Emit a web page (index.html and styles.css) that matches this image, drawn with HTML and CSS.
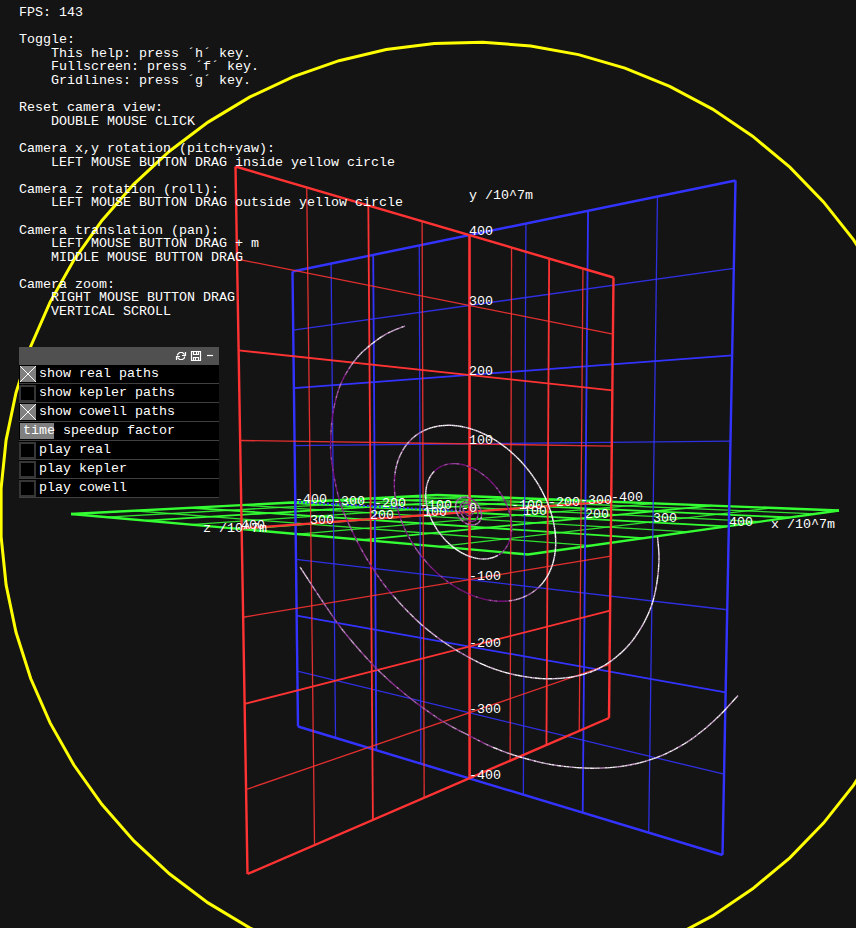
FILE: index.html
```html
<!DOCTYPE html>
<html lang="en">
<head>
<meta charset="utf-8">
<title>Orbit viewer</title>
<link rel="stylesheet" href="styles.css">
</head>
<body>
<main class="viewer">
<svg class="scene" id="scene" viewBox="0 0 856 928" width="856" height="928"></svg>
<div class="overlay">
<pre class="help">FPS: 143

Toggle:
    This help: press ´h´ key.
    Fullscreen: press ´f´ key.
    Gridlines: press ´g´ key.

Reset camera view:
    DOUBLE MOUSE CLICK

Camera x,y rotation (pitch+yaw):
    LEFT MOUSE BUTTON DRAG inside yellow circle

Camera z rotation (roll):
    LEFT MOUSE BUTTON DRAG outside yellow circle

Camera translation (pan):
    LEFT MOUSE BUTTON DRAG + m
    MIDDLE MOUSE BUTTON DRAG

Camera zoom:
    RIGHT MOUSE BUTTON DRAG
    VERTICAL SCROLL</pre>
<section class="panel">
<header class="panel-head">
<svg class="icons" viewBox="0 0 42 12" width="42" height="12">
<path d="M2.5 5.5V4.5L4.5 2.5H7.5L9.5 4.5M10.5 2V5.5H7M9.5 6.500V8L7.500 9.500H4.500L2.500 7.500M1.500 10V6.500H5" />
<path d="M16.500 1.500H25.500V10.500H16.500ZM18.500 2V4.500H23.500V2M21.500 2V4M18.500 10V7.500H23.500V10M20.500 8V10"/>
<path d="M32 5.500H38"/>
</svg>
</header>
<div class="row"><span class="box on"></span>show real paths</div>
<div class="row"><span class="box"></span>show kepler paths</div>
<div class="row"><span class="box on"></span>show cowell paths</div>
<div class="row slider">time speedup factor</div>
<div class="row"><span class="box"></span>play real</div>
<div class="row"><span class="box"></span>play kepler</div>
<div class="row"><span class="box"></span>play cowell</div>
</section>
</div>
</main>
<script src="scene.js"></script>
</body>
</html>
```
FILE: styles.css
```css
body { margin: 0; background: #141414; color: #fff; font: 13.33px/13.6px "Liberation Mono", monospace; overflow: hidden; }
.viewer { display: grid; width: 856px; height: 928px; overflow: hidden; }
.viewer > * { grid-area: 1 / 1; }
.scene { display: block; }
.scene line, .scene polygon, .scene polyline { fill: none; }
.scene text { fill: #fff; font: 13.33px "Liberation Mono", monospace; }
.red { stroke: #ff3333; }
.blue { stroke: #3333ff; }
.green { stroke: #33ff33; }
.limit { stroke: #ffff00; stroke-width: 3; }
.overlay { z-index: 1; padding: 6px 0 0 19px; }
.help { margin: 0; height: 341px; font: inherit; }
.panel { width: 200px; }
.panel-head { height: 18px; background: #505050; display: flex; justify-content: flex-end; align-items: center; }
.icons { fill: none; stroke: #fff; stroke-width: 1.2; margin-right: 2px; }
.row { height: 18px; border-bottom: 1px solid #404040; background: #000; display: flex; align-items: center; line-height: 20px; white-space: pre; }
.box { box-sizing: border-box; width: 17px; height: 17px; border: 2px solid #363636; margin-right: 3px; }
.box.on { width: 16px; height: 16px; border: 0; margin: 0 3px 0 1px; background: linear-gradient(45deg, transparent 47%, #fff 47%, #fff 53%, transparent 53%), linear-gradient(-45deg, #808080 47%, #fff 47%, #fff 53%, #808080 53%); }
.slider { padding-left: 4px; width: 196px; background: linear-gradient(#808080, #808080) 1px 1px / 34px 16px no-repeat #000; }
```
FILE: scene.js
```js
const scene = document.getElementById("scene");
const NS = "http://www.w3.org/2000/svg";

function add(tag, attrs, text) {
  const el = document.createElementNS(NS, tag);
  for (const k in attrs) el.setAttribute(k, attrs[k]);
  if (text !== undefined) el.textContent = text;
  scene.appendChild(el);
  return el;
}

// Projective map of the unit square onto four corners, clockwise from (0,0).
function projector([a, b, c, d]) {
  const dx1 = b[0] - c[0], dx2 = d[0] - c[0], sx = a[0] - b[0] + c[0] - d[0];
  const dy1 = b[1] - c[1], dy2 = d[1] - c[1], sy = a[1] - b[1] + c[1] - d[1];
  const det = dx1 * dy2 - dx2 * dy1;
  const g = (sx * dy2 - dx2 * sy) / det, h = (dx1 * sy - sx * dy1) / det;
  return (u, v) => {
    const w = g * u + h * v + 1;
    return [((b[0] - a[0] + g * b[0]) * u + (d[0] - a[0] + h * d[0]) * v + a[0]) / w,
            ((b[1] - a[1] + g * b[1]) * u + (d[1] - a[1] + h * d[1]) * v + a[1]) / w];
  };
}

function grid(cls, corners) {
  const p = projector(corners), flat = cls === "green";
  for (let i = 0; i <= 8; i++) {
    const outer = i % 8 === 0, even = i % 2 === 0;
    for (const across of [false, true]) {
      if (i === 4 && !flat && (across || cls === "blue")) continue;
      const s = across ? p(0, i / 8) : p(i / 8, 0), e = across ? p(1, i / 8) : p(i / 8, 1);
      let w = outer ? 2.4 : even ? 1.8 : 1.3;
      if (i === 4 && !across && !flat) w = 2.6;
      add("line", { class: cls, x1: s[0], y1: s[1], x2: e[0], y2: e[1], "stroke-width": w, "stroke-opacity": even ? 1 : .88 });
    }
  }
}

const N = 61;
const ring = [];
for (let i = 0; i < N; i++) {
  const t = i / N * 2 * Math.PI;
  ring.push((470.5 + 470 * Math.cos(t)).toFixed(1) + "," + (512.5 + 470.5 * Math.sin(t)).toFixed(1));
}

grid("green", [[437, 495], [839, 510.5], [528, 554.5], [71, 514]]);
grid("blue", [[292.5, 271.5], [735.5, 180.5], [722.5, 855], [298, 726.5]]);
grid("red", [[235.5, 166.5], [613.5, 277.5], [609, 718], [247.5, 874]]);
add("line", { class: "blue", x1: 295, y1: 502, x2: 469, y2: 511.5, "stroke-width": 2, "stroke-dasharray": "2 2" });
add("line", { class: "red", x1: 241, y1: 528.5, x2: 612, y2: 501.5, "stroke-width": 2.2 });

function noise(i) { const x = Math.sin(i * 12.9898) * 43758.5453; return x - Math.floor(x); }

// bright(t) gives the share of white from the start (0) to the end (1) of the path.
function trail(points, bright) {
  const n = points.length - 1;
  for (let i = 0; i < n; i++) {
    const [x1, y1] = points[i], [x2, y2] = points[i + 1];
    const b = Math.max(0, Math.min(1, bright(i / n) + (noise(i) - .5) * .6));
    const c = `rgb(${120 + 135 * b | 0},${15 + 235 * b | 0},${125 + 130 * b | 0})`;
    add("line", { x1, y1, x2, y2, stroke: c, "stroke-width": 1.4 });
  }
}

function ellipse(cx, cy, w, h, r, bright) {
  const n = Math.max(24, Math.round((w + h) * 1.5)), d = Math.acos(r), pts = [];
  for (let i = 0; i <= n; i++) {
    const t = i / n * 2 * Math.PI;
    pts.push([cx + w * Math.cos(t), cy + h * Math.cos(t - d)]);
  }
  trail(pts, bright);
}

function spline(k) {
  const out = [];
  for (let i = 0; i < k.length - 1; i++) {
    const a = k[i - 1] || k[i], b = k[i], c = k[i + 1], d = k[i + 2] || c;
    const n = Math.max(2, Math.round(Math.hypot(c[0] - b[0], c[1] - b[1]) / 2.5));
    for (let j = 0; j < n; j++) {
      const t = j / n;
      out.push([0, 1].map(q => .5 * (2 * b[q] + (c[q] - a[q]) * t + (2 * a[q] - 5 * b[q] + 4 * c[q] - d[q]) * t * t + (3 * b[q] - a[q] - 3 * c[q] + d[q]) * t * t * t)));
    }
  }
  out.push(k[k.length - 1]);
  return out;
}

ellipse(468.7, 511.3, 43, 47.7, .345, t => t > .13 && t < .6 ? .95 : .05);
ellipse(475, 513.3, 80.7, 88, .33, t => t < .1 || t > .64 ? 1 : t < .18 ? .5 : t > .52 ? .6 : .12);
ellipse(468.5, 511, 13, 14, .3, t => t > .4 && t < .7 || t < .2 ? .5 : .2);
ellipse(469, 511.5, 9, 10, .3, () => .15);
ellipse(468, 510, 5, 6, .3, () => .1);
trail(spline([[405, 326], [388, 333], [373, 343], [359, 355.5], [347.5, 371], [339, 388.5], [333.3, 411], [330.9, 435], [331.5, 460], [340, 502], [356.5, 540], [372, 567], [390, 592], [417, 620.5], [443, 641.5], [469, 657.5], [493, 668.5], [520, 675.8], [550, 678.8], [580, 675.3], [605, 665], [626.5, 647.5], [641.5, 627], [651.7, 605], [657, 582], [659, 558], [657.5, 537]]), t => t < .1 ? .7 : t < .45 ? .15 : t < .6 ? .6 : .9);
trail(spline([[300, 567], [323, 602], [345, 633], [378, 670], [410, 698], [443, 721.5], [469, 735.5], [493, 747.3], [520, 757], [554, 765], [592, 768.2], [627, 765.5], [658, 757], [684, 744], [704, 729.5], [722, 713], [738, 695.5]]), t => t < .04 ? .8 : t < .5 ? .35 : .8);

add("polygon", { class: "limit", points: ring.join(" ") });

[[469, 199, "y /10^7m"], [469, 235, "400"], [469, 305, "300"], [469, 375, "200"], [469, 444, "100"],
 [469, 580, "-100"], [469, 647, "-200"], [469, 713, "-300"], [469, 779, "-400"], [461, 512, "-0"],
 [295, 503, "-400"], [333, 505, "-300"], [374, 507, "-200"], [420, 509, "-100"],
 [523, 515, "100"], [585, 518, "200"], [653, 522, "300"], [729, 526, "400"], [771, 528, "x /10^7m"],
 [203, 532, "z /10^7m"], [241, 529, "400"], [310, 524, "300"], [370, 519, "200"], [423, 516, "100"],
 [511, 509, "-100"], [548, 506, "-200"], [580, 504, "-300"], [611, 501, "-400"]
].forEach(([x, y, s]) => add("text", { x, y }, s));
```
